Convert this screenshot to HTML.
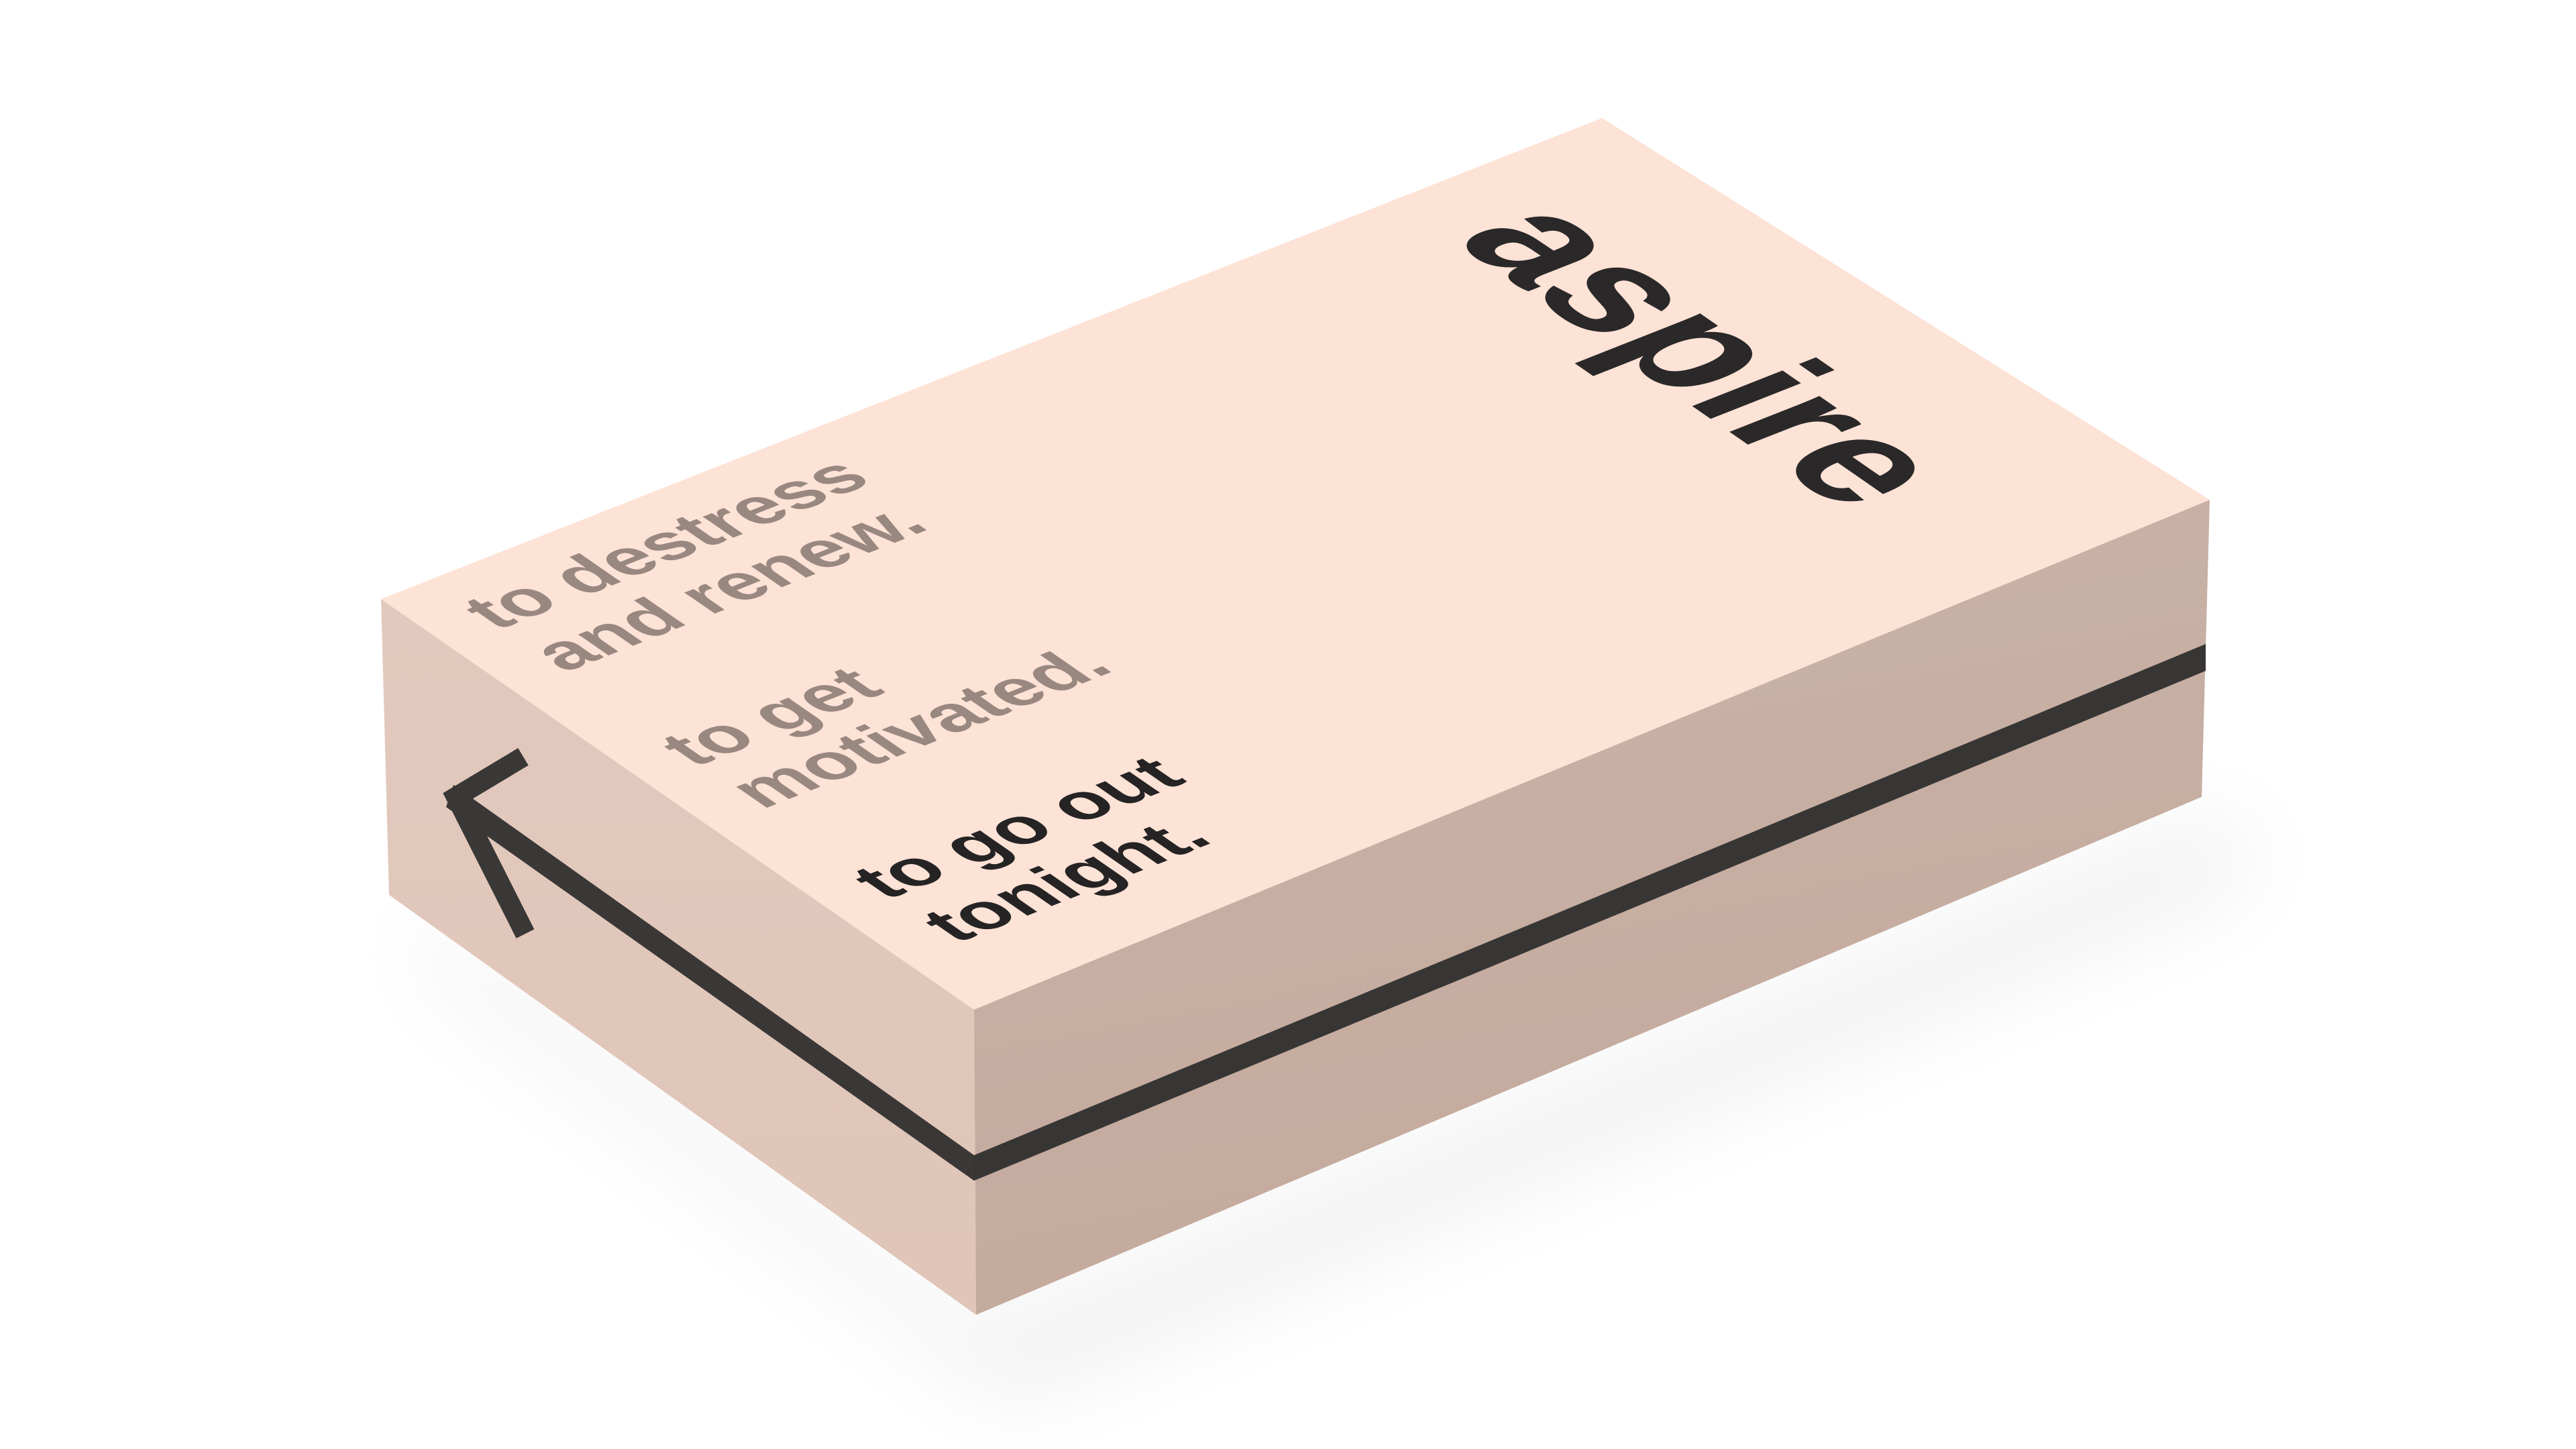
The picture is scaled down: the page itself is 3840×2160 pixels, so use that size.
<!DOCTYPE html>
<html><head><meta charset="utf-8"><style>
html,body{margin:0;padding:0;background:#fff;width:3840px;height:2160px;overflow:hidden}
svg{display:block}
text{font-family:"Liberation Sans",sans-serif;font-weight:bold;text-rendering:geometricPrecision}
</style></head><body>
<svg width="3840" height="2160" viewBox="0 0 3840 2160">
<defs>
<filter id="sh" x="-20%" y="-20%" width="140%" height="140%"><feGaussianBlur stdDeviation="70"/></filter>
<linearGradient id="rg" x1="0" y1="0" x2="0.3" y2="1">
<stop offset="0" stop-color="#c9b3a8"/><stop offset="1" stop-color="#c4aa9d"/></linearGradient>
<linearGradient id="lg" x1="0" y1="0" x2="0" y2="1">
<stop offset="0" stop-color="#e2c9bd"/><stop offset="1" stop-color="#e0c5b8"/></linearGradient>
</defs>
<polygon points="620,1360 1470,1990 3320,1220 3360,1300 1500,2080 640,1440" fill="#000" opacity="0.08" filter="url(#sh)"/>
<polygon points="568,893 1452,1505 1455,1960 580,1334" fill="url(#lg)"/>
<polygon points="1452,1505 3294,745 3282,1188 1455,1960" fill="url(#rg)"/>
<polygon points="568,893 2388,176 3294,745 1452,1505" fill="#fde2d6"/>
<polygon points="1452,1722 3288,960 3288,1000 1452,1760" fill="#383635"/>
<polygon points="676,1170 1452,1722 1452,1760 665,1203" fill="#3a3837"/>
<polyline points="780,1128 680,1188 783,1392" fill="none" stroke="#3a3837" stroke-width="30" stroke-linejoin="miter"/>
<g transform="matrix(1.82,-0.717,1.473,1.02,568,893)">
<g font-size="58" fill="#998880">
<text x="36" y="72">to destress</text>
<text x="40" y="136">and renew.</text>
<text x="36" y="272">to get</text>
<text x="40" y="336">motivated.</text>
</g>
<g font-size="58" fill="#252323">
<text x="36" y="466">to go out</text>
<text x="40" y="532">tonight.</text>
</g>
<text transform="rotate(90)" x="58" y="-830" font-size="140" fill="#2a2828" textLength="400" lengthAdjust="spacingAndGlyphs">aspire</text>
</g>
</svg>
</body></html>
